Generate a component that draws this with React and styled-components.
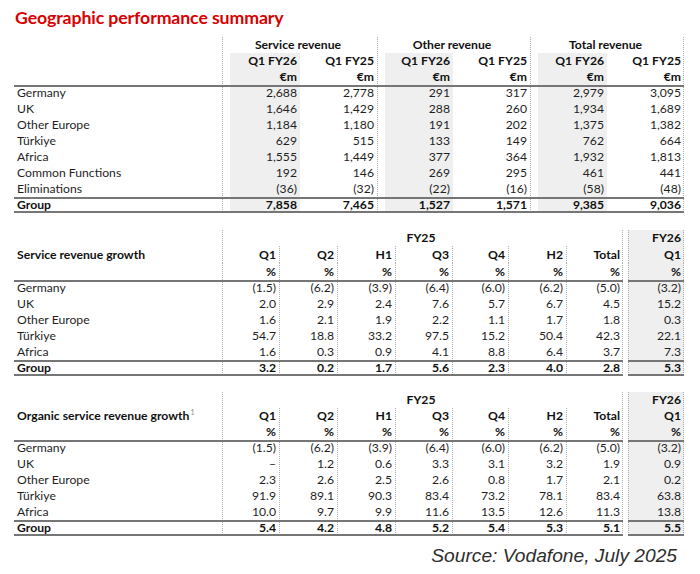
import React from 'react';
import styled, { createGlobalStyle } from 'styled-components';

const GlobalStyle = createGlobalStyle`
  html, body { margin: 0; padding: 0; background: #ffffff; }
  body { font-family: Lato, "Noto Sans", sans-serif; color: #1c1c1c; }
`;

const RULE = '#767676';
const DOT = '#b0b0b0';
const SHADE = '#efefef';

const Page = styled.div`
  width: 700px;
  height: 574px;
  box-sizing: border-box;
  padding: 8px 16px 0 14px;
  display: flex;
  flex-direction: column;
`;

const Title = styled.h1`
  margin: 0 0 0 1px;
  font-size: 17.7px;
  line-height: 20px;
  font-weight: 700;
  color: #d90000;
  letter-spacing: -0.1px;
`;

const Table = styled.table`
  width: 670px;
  border-collapse: separate;
  border-spacing: 0;
  table-layout: fixed;
  font-size: 12.2px;
  line-height: 16px;
  margin-top: ${(p) => p.$mt}px;
`;

const buildBg = (p) => {
  const imgs = [];
  const pos = [];
  const size = [];
  const rep = [];
  const dotImg = `linear-gradient(to bottom, ${DOT} 50%, transparent 50%)`;
  if (p.$dl) {
    imgs.push(dotImg); pos.push('left top'); size.push('1px 2px'); rep.push('repeat-y');
  }
  if (p.$dr) {
    imgs.push(dotImg); pos.push('right top'); size.push('1px 2px'); rep.push('repeat-y');
  }
  if (p.$shade) {
    imgs.push(`linear-gradient(${SHADE}, ${SHADE})`);
    pos.push(`${p.$inset || 0}px 0`);
    size.push('100% 100%');
    rep.push('no-repeat');
  }
  if (!imgs.length) return 'background: none;';
  return `
    background-image: ${imgs.join(', ')};
    background-position: ${pos.join(', ')};
    background-size: ${size.join(', ')};
    background-repeat: ${rep.join(', ')};
  `;
};

const buildRule = (p) => {
  const s = [];
  if (p.$top) s.push(`inset 0 2px 0 ${RULE}`);
  if (p.$bottom) s.push(`inset 0 -2px 0 ${RULE}`);
  return s.length ? `box-shadow: ${s.join(', ')};` : 'box-shadow: none;';
};

const Row = styled.tr`
  height: ${(p) => p.$h || 16}px;
`;

const Cell = styled.td`
  padding: 0 3px 0 ${(p) => (p.$label ? '3px' : '0')};
  text-align: ${(p) => (p.$label ? 'left' : p.$center ? 'center' : 'right')};
  font-weight: ${(p) => (p.$bold ? 700 : 400)};
  color: ${(p) => (p.$bold ? '#111' : '#1f1f1f')};
  white-space: nowrap;
  overflow: visible;
  vertical-align: ${(p) => (p.$bottomAlign ? 'bottom' : 'middle')};
  ${buildBg}
  ${buildRule}
`;

const Gap = styled.td`
  padding: 0;
`;

const Sup = styled.sup`
  font-size: 7px;
  font-weight: 400;
  color: #888;
  vertical-align: 5px;
  line-height: 0;
  margin-left: 1px;
`;

const Source = styled.div`
  margin-top: 8px;
  align-self: flex-end;
  margin-right: 7px;
  font-family: "Liberation Sans", Arial, sans-serif;
  font-style: italic;
  font-size: 19.2px;
  line-height: 24px;
  color: #2e2e2e;
`;

/* ---------- Table 1 ---------- */

const revRows = [
  ['Germany', '2,688', '2,778', '291', '317', '2,979', '3,095'],
  ['UK', '1,646', '1,429', '288', '260', '1,934', '1,689'],
  ['Other Europe', '1,184', '1,180', '191', '202', '1,375', '1,382'],
  ['Türkiye', '629', '515', '133', '149', '762', '664'],
  ['Africa', '1,555', '1,449', '377', '364', '1,932', '1,813'],
  ['Common Functions', '192', '146', '269', '295', '461', '441'],
  ['Eliminations', '(36)', '(32)', '(22)', '(16)', '(58)', '(48)'],
];
const revGroup = ['Group', '7,858', '7,465', '1,527', '1,571', '9,385', '9,036'];
const revWidths = [208, 78, 77, 76, 77, 77, 77];

const revColProps = (i) => ({
  $dl: i === 1 || i === 3 || i === 5,
  $dr: i === 6,
  $shade: i === 1 || i === 3 || i === 5,
  $inset: 8,
});

const RevenueTable = () => (
  <Table $mt={9}>
    <colgroup>
      {revWidths.map((w, i) => <col key={i} style={{ width: w }} />)}
    </colgroup>
    <tbody>
      <Row>
        <Cell $label />
        <Cell colSpan={2} $center $bold $dl>Service revenue</Cell>
        <Cell colSpan={2} $center $bold $dl>Other revenue</Cell>
        <Cell colSpan={2} $center $bold $dl $dr>Total revenue</Cell>
      </Row>
      <Row>
        <Cell $label />
        {[1, 2, 3, 4, 5, 6].map((i) => (
          <Cell key={i} $bold {...revColProps(i)}>{i % 2 ? 'Q1 FY26' : 'Q1 FY25'}</Cell>
        ))}
      </Row>
      <Row>
        <Cell $label />
        {[1, 2, 3, 4, 5, 6].map((i) => (
          <Cell key={i} $bold {...revColProps(i)}>€m</Cell>
        ))}
      </Row>
      {revRows.map((r, ri) => (
        <Row key={r[0]}>
          {r.map((v, i) => (
            <Cell key={i} $label={i === 0} $top={ri === 0} {...(i ? revColProps(i) : {})}>{v}</Cell>
          ))}
        </Row>
      ))}
      <Row>
        {revGroup.map((v, i) => (
          <Cell key={i} $label={i === 0} $bold $top $bottom {...(i ? revColProps(i) : {})}>{v}</Cell>
        ))}
      </Row>
    </tbody>
  </Table>
);

/* ---------- Growth tables ---------- */

const growthWidths = [208, 57, 58, 58, 57, 56, 58, 57, 5, 56];
const periods = ['Q1', 'Q2', 'H1', 'Q3', 'Q4', 'H2', 'Total'];

const gProps = (i) => ({ $dl: true, $dr: i === 6 });
const fyProps = { $dl: true, $dr: true, $shade: true };

const GrowthTable = ({ title, sup, rows, group, mt, hh }) => (
  <Table $mt={mt}>
    <colgroup>
      {growthWidths.map((w, i) => <col key={i} style={{ width: w }} />)}
    </colgroup>
    <tbody>
      <Row $h={hh[0]}>
        <Cell $label />
        <Cell colSpan={7} $center $bold $dl $dr>FY25</Cell>
        <Gap />
        <Cell $bold {...fyProps}>FY26</Cell>
      </Row>
      <Row $h={hh[1]}>
        <Cell $label $bold>
          {title}
          {sup && <Sup>{sup}</Sup>}
        </Cell>
        {periods.map((p, i) => <Cell key={p} $bold {...gProps(i)}>{p}</Cell>)}
        <Gap />
        <Cell $bold {...fyProps}>Q1</Cell>
      </Row>
      <Row $h={hh[2]}>
        <Cell $label />
        {periods.map((p, i) => <Cell key={p} $bold {...gProps(i)}>%</Cell>)}
        <Gap />
        <Cell $bold {...fyProps}>%</Cell>
      </Row>
      {rows.map((r, ri) => (
        <Row key={r[0]}>
          <Cell $label $top={ri === 0}>{r[0]}</Cell>
          {r.slice(1, 8).map((v, i) => <Cell key={i} $top={ri === 0} {...gProps(i)}>{v}</Cell>)}
          <Gap />
          <Cell $top={ri === 0} {...fyProps}>{r[8]}</Cell>
        </Row>
      ))}
      <Row>
        <Cell $label $bold $top $bottom>{group[0]}</Cell>
        {group.slice(1, 8).map((v, i) => <Cell key={i} $bold $top $bottom {...gProps(i)}>{v}</Cell>)}
        <Gap />
        <Cell $bold $top $bottom {...fyProps}>{group[8]}</Cell>
      </Row>
    </tbody>
  </Table>
);

const serviceRows = [
  ['Germany', '(1.5)', '(6.2)', '(3.9)', '(6.4)', '(6.0)', '(6.2)', '(5.0)', '(3.2)'],
  ['UK', '2.0', '2.9', '2.4', '7.6', '5.7', '6.7', '4.5', '15.2'],
  ['Other Europe', '1.6', '2.1', '1.9', '2.2', '1.1', '1.7', '1.8', '0.3'],
  ['Türkiye', '54.7', '18.8', '33.2', '97.5', '15.2', '50.4', '42.3', '22.1'],
  ['Africa', '1.6', '0.3', '0.9', '4.1', '8.8', '6.4', '3.7', '7.3'],
];
const serviceGroup = ['Group', '3.2', '0.2', '1.7', '5.6', '2.3', '4.0', '2.8', '5.3'];

const organicRows = [
  ['Germany', '(1.5)', '(6.2)', '(3.9)', '(6.4)', '(6.0)', '(6.2)', '(5.0)', '(3.2)'],
  ['UK', '–', '1.2', '0.6', '3.3', '3.1', '3.2', '1.9', '0.9'],
  ['Other Europe', '2.3', '2.6', '2.5', '2.6', '0.8', '1.7', '2.1', '0.2'],
  ['Türkiye', '91.9', '89.1', '90.3', '83.4', '73.2', '78.1', '83.4', '63.8'],
  ['Africa', '10.0', '9.7', '9.9', '11.6', '13.5', '12.6', '11.3', '13.8'],
];
const organicGroup = ['Group', '5.4', '4.2', '4.8', '5.2', '5.4', '5.3', '5.1', '5.5'];

export default function App() {
  return (
    <>
      <GlobalStyle />
      <Page>
        <Title>Geographic performance summary</Title>
        <RevenueTable />
        <GrowthTable
          mt={17}
          hh={[16, 17, 17]}
          title="Service revenue growth"
          rows={serviceRows}
          group={serviceGroup}
        />
        <GrowthTable
          mt={16}
          hh={[16, 16, 16]}
          title="Organic service revenue growth"
          sup="1"
          rows={organicRows}
          group={organicGroup}
        />
        <Source>Source: Vodafone, July 2025</Source>
      </Page>
    </>
  );
}
